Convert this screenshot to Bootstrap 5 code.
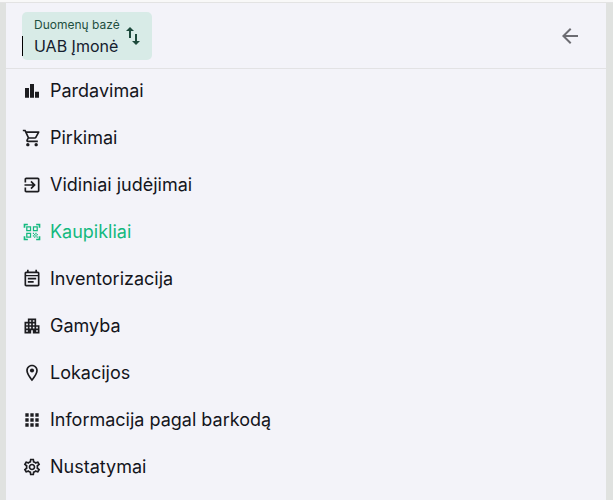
<!DOCTYPE html>
<html lang="lt">
<head>
    <meta charset="UTF-8">
    <meta name="viewport" content="width=device-width, initial-scale=1.0">
    <title>Meniu</title>
    <link rel="stylesheet" href="https://cdn.jsdelivr.net/npm/bootstrap@5.3.0/dist/css/bootstrap.min.css">
    <style>
        html, body { height: 100%; }
        body {
            background: #e0e2e0;
            font-family: Inter, "Liberation Sans", sans-serif;
            overflow: hidden;
        }
        .top-strip { height: 3px; background: #f8f8f8; border-bottom: 1px solid #e3e3e3; }
        .side-panel {
            margin: 0 7px 0 6px;
            height: 497px;
            background: #f3f3f9;
        }
        .panel-head {
            height: 66px;
            padding: 9px 24px 0 16px;
            border-bottom: 1px solid #e2e2e4;
        }
        .db-chip {
            width: 130px;
            height: 48px;
            padding: 6px 10px 0 12px;
            background: #d8ebe7;
            border-radius: 5px;
            position: relative;
        }
        .db-label { font-size: 12px; line-height: 14px; color: #1f4f40; }
        .db-name { font-size: 16px; line-height: 22px; margin-top: 3px; color: #14202e; }
        .db-caret { position: absolute; left: 0; top: 24px; width: 1px; height: 20px; background: #000; }
        .db-swap { position: absolute; left: 99px; top: 12px; width: 24px; height: 24px; fill: #1d4a3c; }
        .back-icon { width: 24px; height: 24px; margin-top: 12px; fill: #6c6c72; }
        .menu-row {
            height: 47px;
            padding: 0 0 4px 16px;
            color: #14151c;
            font-size: 18px;
            text-decoration: none;
        }
        .menu-row svg { width: 20px; height: 20px; margin-right: 8px; fill: #1c1c20; flex: none; }
        .menu-row.is-active { color: #13b97f; }
        .menu-row.is-active svg { fill: #13b97f; }
    </style>
</head>
<body>
    <div class="top-strip"></div>
    <div class="side-panel">
        <div class="panel-head d-flex justify-content-between align-items-start">
            <div class="db-chip">
                <div class="db-label">Duomenų bazė</div>
                <div class="db-name">UAB Įmonė</div>
                <span class="db-caret"></span>
                <svg class="db-swap" viewBox="0 0 24 24"><path d="M16 17.01V10h-2v7.01h-3L15 21l4-3.99h-3zM9 3L5 6.99h3V14h2V6.99h3L9 3z"/></svg>
            </div>
            <svg class="back-icon" viewBox="0 0 24 24"><path d="M20 11H7.83l5.59-5.59L12 4l-8 8 8 8 1.41-1.41L7.83 13H20v-2z"/></svg>
        </div>
        <nav class="d-flex flex-column">
            <a class="menu-row d-flex align-items-center" href="#"><svg viewBox="0 0 24 24"><path d="M3.6 8.4h4.8V20H3.6zM9.6 3.6h4.8V20H9.6zM15.6 12.8h4.8V20h-4.8z"/></svg>Pardavimai</a>
            <a class="menu-row d-flex align-items-center" href="#"><svg viewBox="0 0 24 24"><path d="M15.55 13c.75 0 1.41-.41 1.75-1.03l3.58-6.49c.37-.66-.11-1.48-.87-1.48H5.21l-.94-2H1v2h2l3.6 7.59-1.35 2.44C4.52 15.37 5.48 17 7 17h12v-2H7l1.1-2h7.45zM6.16 6h12.15l-2.76 5H8.53L6.16 6zM7 18c-1.1 0-1.99.9-1.99 2S5.9 22 7 22s2-.9 2-2-.9-2-2-2zm10 0c-1.1 0-1.99.9-1.99 2s.89 2 1.99 2 2-.9 2-2-.9-2-2-2z"/></svg>Pirkimai</a>
            <a class="menu-row d-flex align-items-center" href="#"><svg viewBox="0 0 24 24"><path d="M10.09 15.59L11.5 17l5-5-5-5-1.41 1.41L12.67 11H3v2h9.67l-2.58 2.59zM19 3H5c-1.11 0-2 .9-2 2v4h2V5h14v14H5v-4H3v4c0 1.1.89 2 2 2h14c1.1 0 2-.9 2-2V5c0-1.1-.9-2-2-2z"/></svg>Vidiniai judėjimai</a>
            <a class="menu-row is-active d-flex align-items-center" href="#"><svg viewBox="0 0 24 24"><path d="M9.5 6.5v3h-3v-3h3M11 5H5v6h6V5zm-1.5 9.5v3h-3v-3h3M11 13H5v6h6v-6zm6.5-6.5v3h-3v-3h3M19 5h-6v6h6V5zm-6 8h1.5v1.5H13V13zm1.5 1.5H16V16h-1.5v-1.5zM16 13h1.5v1.5H16V13zm-3 3h1.5v1.5H13V16zm1.5 1.5H16V19h-1.5v-1.5zM16 16h1.5v1.5H16V16zm1.5-1.5H19V16h-1.5v-1.5zm0 3H19V19h-1.5v-1.5zM22 7h-2V4h-3V2h5v5zm0 15v-5h-2v3h-3v2h5zM2 22h5v-2H4v-3H2v5zM2 2v5h2V4h3V2H2z"/></svg>Kaupikliai</a>
            <a class="menu-row d-flex align-items-center" href="#"><svg viewBox="0 0 24 24"><path fill-rule="evenodd" d="M19 3h-1V1h-2v2H8V1H6v2H5c-1.11 0-2 .9-2 2v14c0 1.1.89 2 2 2h14c1.1 0 2-.9 2-2V5c0-1.1-.9-2-2-2zM5 5h14v2.2H5V5zm0 3.6h14V19H5V8.6z"/><path d="M7 10.5h10v2H7zM7 14.5h7v2H7z"/></svg>Inventorizacija</a>
            <a class="menu-row d-flex align-items-center" href="#"><svg viewBox="0 0 24 24"><path d="M17 11V3H7v4H3v14h8v-4h2v4h8V11h-4zM7 19H5v-2h2v2zm0-4H5v-2h2v2zm0-4H5V9h2v2zm4 4H9v-2h2v2zm0-4H9V9h2v2zm0-4H9V5h2v2zm4 8h-2v-2h2v2zm0-4h-2V9h2v2zm0-4h-2V5h2v2zm4 12h-2v-2h2v2zm0-4h-2v-2h2v2z"/></svg>Gamyba</a>
            <a class="menu-row d-flex align-items-center" href="#"><svg viewBox="0 0 24 24"><path d="M12 2C8.13 2 5 5.13 5 9c0 5.25 7 13 7 13s7-7.75 7-13c0-3.87-3.13-7-7-7zM7 9c0-2.76 2.24-5 5-5s5 2.24 5 5c0 2.88-2.88 7.19-5 9.88C9.92 16.21 7 11.85 7 9z"/><circle cx="12" cy="9" r="2.5"/></svg>Lokacijos</a>
            <a class="menu-row d-flex align-items-center" href="#"><svg viewBox="0 0 24 24"><path d="M4 8h4V4H4v4zm6 12h4v-4h-4v4zm-6 0h4v-4H4v4zm0-6h4v-4H4v4zm6 0h4v-4h-4v4zm6-10v4h4V4h-4zm-6 4h4V4h-4v4zm6 6h4v-4h-4v4zm0 6h4v-4h-4v4z"/></svg>Informacija pagal barkodą</a>
            <a class="menu-row d-flex align-items-center" href="#"><svg viewBox="0 0 24 24"><path d="M19.43 12.98c.04-.32.07-.64.07-.98 0-.34-.03-.66-.07-.98l2.11-1.65c.19-.15.24-.42.12-.64l-2-3.46c-.09-.16-.26-.25-.44-.25-.06 0-.12.01-.17.03l-2.49 1c-.52-.4-1.08-.73-1.69-.98l-.38-2.65C14.46 2.18 14.25 2 14 2h-4c-.25 0-.46.18-.49.42l-.38 2.65c-.61.25-1.17.59-1.69.98l-2.49-1c-.06-.02-.12-.03-.18-.03-.17 0-.34.09-.43.25l-2 3.46c-.13.22-.07.49.12.64l2.11 1.65c-.04.32-.07.65-.07.98 0 .33.03.66.07.98l-2.11 1.65c-.19.15-.24.42-.12.64l2 3.46c.09.16.26.25.44.25.06 0 .12-.01.17-.03l2.49-1c.52.4 1.08.73 1.69.98l.38 2.65c.03.24.24.42.49.42h4c.25 0 .46-.18.49-.42l.38-2.65c.61-.25 1.17-.59 1.69-.98l2.49 1c.06.02.12.03.18.03.17 0 .34-.09.43-.25l2-3.46c.12-.22.07-.49-.12-.64l-2.11-1.65zm-1.98-1.71c.04.31.05.52.05.73 0 .21-.02.43-.05.73l-.14 1.13.89.7 1.08.84-.7 1.21-1.27-.51-1.04-.42-.9.68c-.43.32-.84.56-1.25.73l-1.06.43-.16 1.13-.2 1.35h-1.4l-.19-1.35-.16-1.13-1.06-.43c-.43-.18-.83-.41-1.23-.71l-.91-.7-1.06.43-1.27.51-.7-1.21 1.08-.84.89-.7-.14-1.13c-.03-.31-.05-.54-.05-.74s.02-.43.05-.73l.14-1.13-.89-.7-1.08-.84.7-1.21 1.27.51 1.04.42.9-.68c.43-.32.84-.56 1.25-.73l1.06-.43.16-1.13.2-1.35h1.39l.19 1.35.16 1.13 1.06.43c.43.18.83.41 1.23.71l.91.7 1.06-.43 1.27-.51.7 1.21-1.07.85-.89.7.14 1.13zM12 8c-2.21 0-4 1.79-4 4s1.79 4 4 4 4-1.79 4-4-1.79-4-4-4zm0 6c-1.1 0-2-.9-2-2s.9-2 2-2 2 .9 2 2-.9 2-2 2z"/></svg>Nustatymai</a>
        </nav>
    </div>
    <script src="https://cdn.jsdelivr.net/npm/bootstrap@5.3.0/dist/js/bootstrap.bundle.min.js"></script>
</body>
</html>
